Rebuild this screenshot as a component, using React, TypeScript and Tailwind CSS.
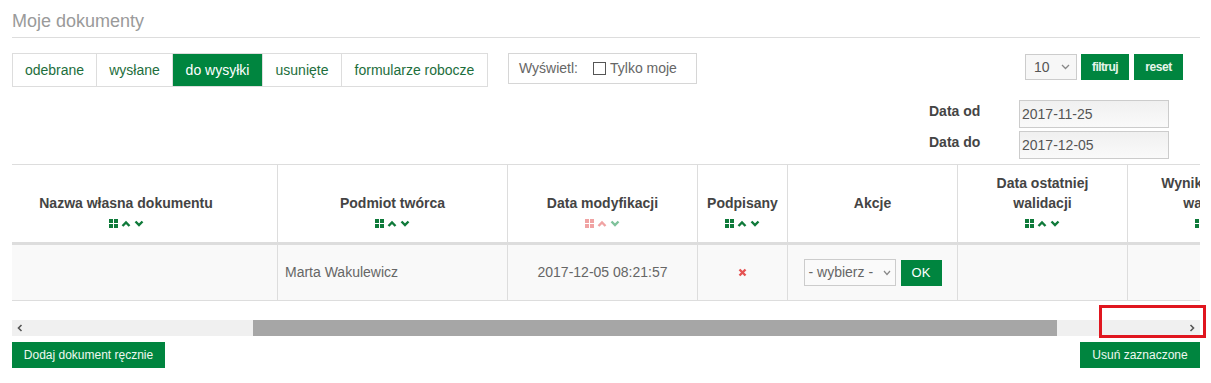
import React from "react";

const GREEN = "bg-[#00853f]";

function SortIcons({ active = false }: { active?: boolean }) {
  const g = active ? "#f0a3a3" : "#0f7a3a";
  const up = active ? "#f0a3a3" : "#0f7a3a";
  const down = active ? "#7fc29b" : "#0f7a3a";
  return (
    <div className="flex items-center justify-center gap-[3px] h-[10px] mt-[5px]">
      <svg width="9" height="9" viewBox="0 0 9 9">
        <rect x="0" y="0" width="4" height="4" fill={g} />
        <rect x="5" y="0" width="4" height="4" fill={g} />
        <rect x="0" y="5" width="4" height="4" fill={g} />
        <rect x="5" y="5" width="4" height="4" fill={g} />
      </svg>
      <svg width="10" height="9" viewBox="0 0 10 9">
        <polyline points="1.5,7 5,3.5 8.5,7" fill="none" stroke={up} strokeWidth="2.4" />
      </svg>
      <svg width="10" height="9" viewBox="0 0 10 9">
        <polyline points="1.5,2.5 5,6 8.5,2.5" fill="none" stroke={down} strokeWidth="2.4" />
      </svg>
    </div>
  );
}

function HeadCell({ children, active }: { children: React.ReactNode; active?: boolean }) {
  return (
    <div className="h-[81px] border-t border-b-[3px] border-r border-[#dddddd] flex flex-col justify-end items-center pb-[14px] text-center text-[14px] font-bold leading-[20px] text-[#444]">
      <div>{children}</div>
      <SortIcons active={active} />
    </div>
  );
}

function HeadCellPlain({ children }: { children: React.ReactNode }) {
  return (
    <div className="h-[81px] border-t border-b-[3px] border-r border-[#dddddd] flex flex-col justify-end items-center pb-[29px] text-center text-[14px] font-bold leading-[20px] text-[#444]">
      <div>{children}</div>
    </div>
  );
}

function BodyCell({ children, className = "" }: { children?: React.ReactNode; className?: string }) {
  return (
    <div className={"h-[56px] border-b border-r border-[#dddddd] bg-[#f9f9f9] flex items-center text-[14px] text-[#666] " + className}>
      {children}
    </div>
  );
}

export default function App() {
  const tabs: [string, string][] = [
    ["odebrane", "w-[84px]"],
    ["wysłane", "w-[76px]"],
    ["do wysyłki", "w-[90px]"],
    ["usunięte", "w-[79px]"],
    ["formularze robocze", "w-[145px]"],
  ];
  return (
    <div className="w-[1211px] h-[383px] bg-white px-[12px] font-['Liberation_Sans',Arial,sans-serif] overflow-hidden">
      <div className="w-[1188px]">
        <div className="pt-[10px] pb-[5px] text-[18px] leading-[22px] text-[#9a9a9a] border-b border-[#dddddd]">
          Moje dokumenty
        </div>

        <div className="mt-[15px] flex items-start">
          <div className="flex border border-[#dddddd] h-[34px]">
            {tabs.map(([t, w], i) => (
              <div
                key={t}
                className={
                  "flex items-center justify-center text-[14px] " +
                  w +
                  " " +
                  (i < tabs.length - 1 ? "border-r border-[#dddddd] " : "") +
                  (t === "do wysyłki" ? GREEN + " text-white" : "text-[#1d6e3c]")
                }
              >
                {t}
              </div>
            ))}
          </div>

          <div className="ml-[20px] h-[31px] w-[189px] border border-[#d6d6d6] flex items-center pl-[10px] text-[14px] text-[#666]">
            <span>Wyświetl:</span>
            <span className="ml-[15px] w-[13px] h-[13px] border border-[#555] bg-white"></span>
            <span className="ml-[4px]">Tylko moje</span>
          </div>

          <div className="ml-auto mr-[17px] mt-[1px] flex items-center">
            <div className="w-[52px] h-[26px] border border-[#cccccc] bg-[#f7f7f7] flex items-center pl-[8px] text-[14px] text-[#555]">
              <span>10</span>
              <svg className="ml-auto mr-[6px]" width="9" height="6" viewBox="0 0 9 6">
                <polyline points="1,1 4.5,4.5 8,1" fill="none" stroke="#888" strokeWidth="1.3" />
              </svg>
            </div>
            <div className={"ml-[4px] w-[48px] h-[26px] flex items-center justify-center text-[12px] font-bold tracking-[-0.6px] text-[#e8f5ec] " + GREEN}>
              filtruj
            </div>
            <div className={"ml-[5px] w-[49px] h-[26px] flex items-center justify-center text-[12px] font-bold tracking-[-0.4px] text-[#e8f5ec] " + GREEN}>
              reset
            </div>
          </div>
        </div>

        <div className="mt-[13px] flex justify-end pr-[31px]">
          <div className="flex flex-col gap-[3px]">
            {[
              ["Data od", "2017-11-25"],
              ["Data do", "2017-12-05"],
            ].map(([l, v]) => (
              <div key={l} className="flex items-start">
                <div className="w-[90px] pt-[3px] text-[14px] font-bold text-[#444] leading-[16px]">{l}</div>
                <div className="w-[150px] h-[28px] border border-[#cccccc] bg-gradient-to-b from-[#f0f0f0] to-[#fafafa] flex items-center pl-[2px] text-[14px] text-[#555]">
                  {v}
                </div>
              </div>
            ))}
          </div>
        </div>

        <div className="mt-[5px] overflow-hidden w-[1188px]">
          <div className="ml-[-37px] grid grid-cols-[303px_230px_190px_90px_170px_170px_170px] w-max">
            <HeadCell>Nazwa własna dokumentu</HeadCell>
            <HeadCell>Podmiot twórca</HeadCell>
            <HeadCell active>Data modyfikacji</HeadCell>
            <HeadCell>Podpisany</HeadCell>
            <HeadCellPlain>Akcje</HeadCellPlain>
            <HeadCell>
              Data ostatniej
              <br />
              walidacji
            </HeadCell>
            <HeadCell>
              Wynik ostatniej
              <br />
              walidacji
            </HeadCell>

            <BodyCell />
            <BodyCell className="pl-[7px]">Marta Wakulewicz</BodyCell>
            <BodyCell className="justify-center">2017-12-05 08:21:57</BodyCell>
            <BodyCell className="justify-center">
              <svg width="9" height="9" viewBox="0 0 9 9">
                <path d="M1.5 1.5 L7.5 7.5 M7.5 1.5 L1.5 7.5" stroke="#e55353" strokeWidth="2.4" />
              </svg>
            </BodyCell>
            <BodyCell className="justify-center">
              <div className="w-[92px] h-[27px] border border-[#cccccc] bg-[#fafafa] flex items-center pl-[4px] text-[14px] text-[#666]">
                <span>- wybierz -</span>
                <svg className="ml-auto mr-[4px]" width="8" height="6" viewBox="0 0 8 6">
                  <polyline points="1,1 4,4.5 7,1" fill="none" stroke="#888" strokeWidth="1.2" />
                </svg>
              </div>
              <div className={"ml-[5px] w-[41px] h-[26px] flex items-center justify-center text-[13px] text-white " + GREEN}>OK</div>
            </BodyCell>
            <BodyCell />
            <BodyCell />
          </div>
        </div>

        <div className="relative mt-[19px] h-[16px] bg-[#f0f0f0] flex items-center">
          <svg className="ml-[5px]" width="6" height="8" viewBox="0 0 6 8">
            <polyline points="4.5,1 1.5,4 4.5,7" fill="none" stroke="#555" strokeWidth="1.6" />
          </svg>
          <div className="ml-[230px] w-[804px] h-[16px] bg-[#a6a6a6]"></div>
          <svg className="ml-auto mr-[5px]" width="6" height="8" viewBox="0 0 6 8">
            <polyline points="1.5,1 4.5,4 1.5,7" fill="none" stroke="#555" strokeWidth="1.6" />
          </svg>
          <div className="absolute left-[1087px] top-[-15px] w-[107px] h-[33px] border-[3px] border-[#e0161f]"></div>
        </div>

        <div className="mt-[6px] flex justify-between">
          <div className={"h-[26px] w-[153px] flex items-center justify-center text-[12px] text-[#eef8f0] " + GREEN}>
            Dodaj dokument ręcznie
          </div>
          <div className={"h-[26px] w-[120px] flex items-center justify-center text-[12px] text-[#eef8f0] " + GREEN}>
            Usuń zaznaczone
          </div>
        </div>
      </div>
    </div>
  );
}
